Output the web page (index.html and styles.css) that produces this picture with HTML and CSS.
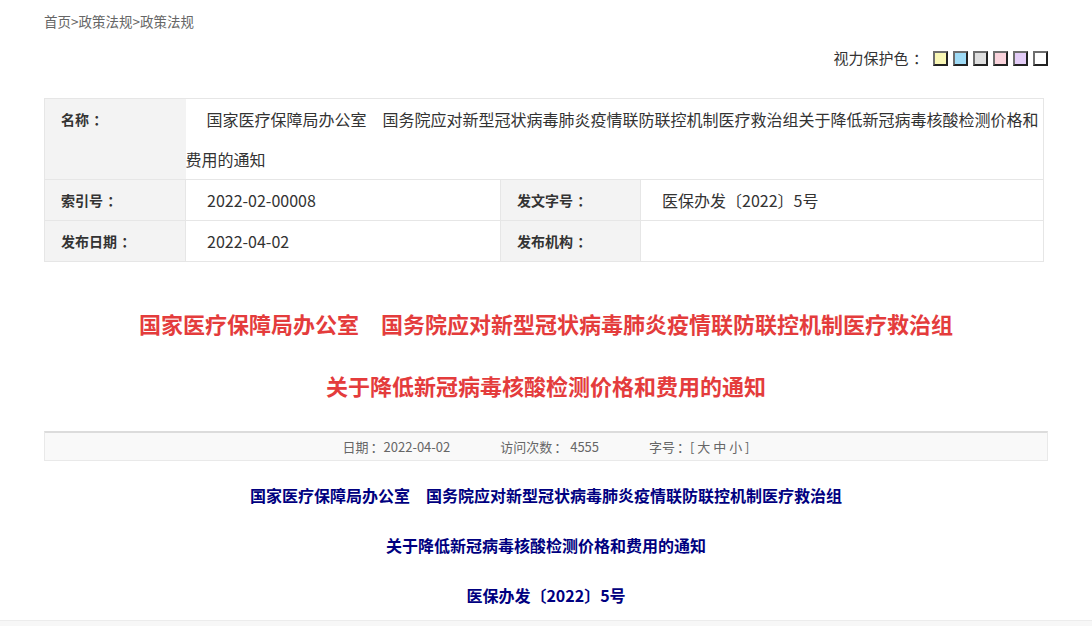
FILE: index.html
```html
<!DOCTYPE html>
<html lang="zh-CN">
<head>
<meta charset="utf-8">
<title>关于降低新冠病毒核酸检测价格和费用的通知</title>
<link rel="stylesheet" href="styles.css">
</head>
<body>
<div class="page">
  <div class="crumb">首页&gt;政策法规&gt;政策法规</div>
  <div class="protect">
    <span class="protect-label">视力保护色<span class="colon">：</span></span>
    <span class="swatch sw-yellow"></span>
    <span class="swatch sw-blue"></span>
    <span class="swatch sw-gray"></span>
    <span class="swatch sw-pink"></span>
    <span class="swatch sw-purple"></span>
    <span class="swatch sw-white"></span>
  </div>
  <table class="meta">
    <colgroup>
      <col class="c1"><col class="c2"><col class="c3"><col class="c4">
    </colgroup>
    <tr>
      <th>名称<span class="colon">：</span></th>
      <td colspan="3" class="val">国家医疗保障局办公室　国务院应对新型冠状病毒肺炎疫情联防联控机制医疗救治组关于降低新冠病毒核酸检测价格和费用的通知</td>
    </tr>
    <tr>
      <th>索引号<span class="colon">：</span></th>
      <td class="val">2022-02-00008</td>
      <th>发文字号<span class="colon">：</span></th>
      <td class="val">医保办发〔2022〕5号</td>
    </tr>
    <tr>
      <th>发布日期<span class="colon">：</span></th>
      <td class="val">2022-04-02</td>
      <th>发布机构<span class="colon">：</span></th>
      <td class="val"></td>
    </tr>
  </table>
  <h1 class="title">国家医疗保障局办公室　国务院应对新型冠状病毒肺炎疫情联防联控机制医疗救治组<br>关于降低新冠病毒核酸检测价格和费用的通知</h1>
  <div class="infobar">
    <span class="info-item">日期<span class="colon-sm">：</span>2022-04-02</span>
    <span class="info-item">访问次数<span class="colon-sm">：</span> 4555</span>
    <span class="info-item">字号<span class="colon-sm">：</span>[ 大 中 小 ]</span>
  </div>
  <div class="content">
    <p>国家医疗保障局办公室　国务院应对新型冠状病毒肺炎疫情联防联控机制医疗救治组</p>
    <p>关于降低新冠病毒核酸检测价格和费用的通知</p>
    <p>医保办发〔2022〕5号</p>
  </div>
</div>
<div class="footer-strip"></div>
</body>
</html>
```

FILE: styles.css
```css
html, body {
  margin: 0;
  padding: 0;
  background: #fff;
}
body {
  font-family: "Noto Sans CJK SC", "Noto Sans", sans-serif;
  color: #333;
}
.colon {
  margin-left: 0.3em;
}
.colon-sm {
  margin-left: 0.15em;
}
.page {
  width: 1004px;
  margin: 0 auto;
}
.crumb {
  padding-top: 11px;
  font-size: 13.5px;
  line-height: 20px;
  color: #666;
}
.protect {
  margin-top: 17px;
  height: 20px;
  display: flex;
  justify-content: flex-end;
  align-items: center;
  font-size: 15px;
  color: #333;
}
.protect-label {
  margin-right: 0;
  line-height: 20px;
}
.swatch {
  width: 11px;
  height: 11px;
  border-style: solid;
  border-width: 2px;
  border-color: #6e6e6e #222 #222 #6e6e6e;
  margin-left: 5px;
}
.swatch:first-of-type { margin-left: 0; }
.sw-yellow { background: #f9f7b5; }
.sw-blue { background: #9fdbf6; }
.sw-gray { background: #dfdfdf; }
.sw-pink { background: #fad3dc; }
.sw-purple { background: #e3ccf7; }
.sw-white { background: #fff; }

.meta {
  margin-top: 30px;
  width: 1000px;
  border-collapse: collapse;
  table-layout: fixed;
  border: 1px solid #e6e6e6;
}
.c1 { width: 141px; }
.c2 { width: 315px; }
.c3 { width: 140px; }
.meta th, .meta td {
  border: 1px solid #e6e6e6;
  padding: 0;
  vertical-align: top;
  line-height: 40px;
}
.meta th {
  background: #f3f3f3;
  text-align: left;
  font-size: 14px;
  font-weight: bold;
  color: #333;
  padding-left: 16px;
}
.meta td.val {
  font-size: 16px;
  color: #333;
  text-indent: 21px;
  border-left: none;
}
.meta tr:first-child th { border-right: none; }

.title {
  margin: 30px 0 0;
  text-align: center;
  font-size: 22px;
  font-weight: bold;
  line-height: 62px;
  color: #e43c3c;
}
.infobar {
  margin-top: 15px;
  border: 1px solid #e9e9e9;
  border-top: 2px solid #dcdcdc;
  background: #f9f9f9;
  line-height: 27px;
  text-align: center;
  font-size: 13px;
  color: #666;
  display: flex;
  justify-content: center;
  gap: 50px;
}
.content {
  margin-top: 9px;
  text-align: center;
}
.content p {
  margin: 0;
  line-height: 50px;
  font-size: 16px;
  font-weight: bold;
  color: #000080;
}
.footer-strip {
  border-top: 1px solid #ececec;
  background: #f7f7f7;
  height: 5px;
}
```
